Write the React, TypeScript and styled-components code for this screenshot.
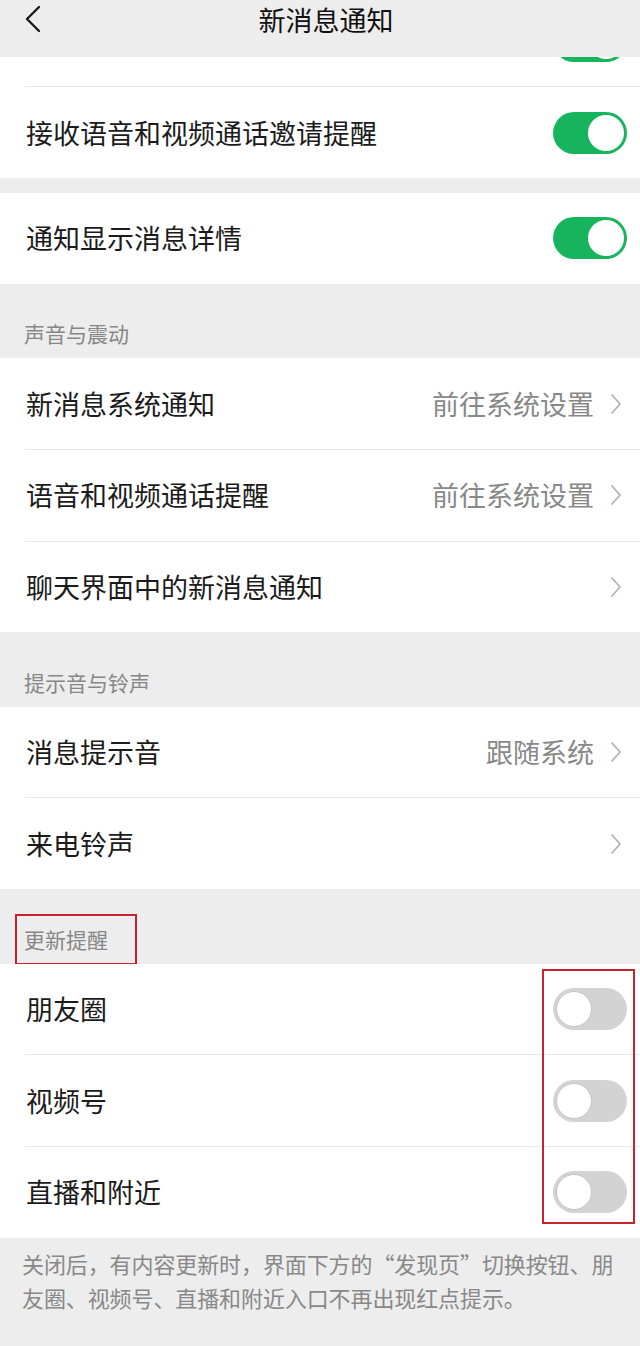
import React from 'react';
import styled, { createGlobalStyle } from 'styled-components';

const GlobalStyle = createGlobalStyle`
  html, body {
    margin: 0;
    padding: 0;
    background: #ededed;
  }
  body {
    font-family: "Noto Sans CJK SC", "Noto Sans", sans-serif;
    -webkit-font-smoothing: antialiased;
  }
`;

const Page = styled.div`
  width: 640px;
  height: 1346px;
  overflow: hidden;
  background: #ededed;
  display: flex;
  flex-direction: column;
`;

const Header = styled.header`
  flex: none;
  height: 57px;
  position: relative;
  display: flex;
  justify-content: center;
  align-items: flex-start;
  padding-left: 12px;
  background: #ededed;
  z-index: 1;
`;

const Title = styled.h1`
  margin: 0;
  font-size: 27px;
  font-weight: 400;
  line-height: 40px;
  color: #111;
`;

const BackButton = styled.button`
  position: absolute;
  left: 18px;
  top: 2px;
  width: 30px;
  height: 34px;
  border: 0;
  padding: 0;
  background: none;
  display: flex;
  align-items: center;
  justify-content: center;
`;

const Viewport = styled.div`
  flex: 1;
  overflow: hidden;
`;

// the list is scrolled a little, so the first row sits under the header
const Scroller = styled.div`
  margin-top: -61.4px;
`;

const Section = styled.section<{ $gap?: boolean }>`
  position: relative;
  background: #fff;
  margin-top: ${(p) => (p.$gap ? '15px' : '0')};
`;

const RowWrap = styled.div`
  & + &::before {
    content: '';
    display: block;
    height: 1px;
    margin-left: 25px;
    background: #e8e8e8;
  }
`;

const Row = styled.div`
  height: 90.7px;
  display: flex;
  align-items: center;
  padding: 0 13px 0 26px;
`;

const Label = styled.span`
  flex: 1;
  font-size: 27px;
  line-height: 40px;
  color: #1b1b1b;
`;

const Value = styled.span`
  font-size: 27px;
  line-height: 40px;
  color: #888;
  margin-right: 16px;
`;

const Chevron = styled.svg`
  width: 12px;
  height: 22px;
  margin-right: 5px;
  flex: none;
`;

const Track = styled.div<{ $on: boolean }>`
  flex: none;
  width: 74px;
  height: 42px;
  border-radius: 21px;
  box-sizing: border-box;
  background: ${(p) => (p.$on ? '#17b45e' : '#d3d3d3')};
  display: flex;
  justify-content: ${(p) => (p.$on ? 'flex-end' : 'flex-start')};
  align-items: center;
  padding: 3px;
`;

const Knob = styled.div<{ $on: boolean }>`
  width: 36px;
  height: 36px;
  border-radius: 50%;
  background: #fff;
  box-sizing: border-box;
  border: ${(p) => (p.$on ? '0' : '1px solid #c4c4c4')};
`;

const GroupTitle = styled.div<{ $marked?: boolean }>`
  height: 74.5px;
  display: flex;
  align-items: flex-end;
  padding: 0 0 ${(p) => (p.$marked ? '0' : '10px')} ${(p) => (p.$marked ? '15px' : '24px')};
  box-sizing: border-box;
  font-size: 21px;
  line-height: 30px;
  color: #878787;
`;

const Marked = styled.span`
  display: inline-flex;
  align-items: center;
  height: 50px;
  box-sizing: border-box;
  padding: 0 27px 0 7px;
  border: 2px solid #c9222c;
  border-bottom-width: 1px;
`;

const MarkBox = styled.div`
  position: absolute;
  top: 5px;
  right: 5px;
  width: 93px;
  height: 255px;
  box-sizing: border-box;
  border: 2px solid #c9222c;
  pointer-events: none;
`;

const Note = styled.p`
  margin: 0;
  padding: 8px 22px 0 22px;
  font-size: 22px;
  line-height: 34px;
  color: #888;
  letter-spacing: -0.1px;
`;

type Item = {
  label: string;
  toggle?: boolean;
  value?: string;
  link?: boolean;
};

function Switch({ on }: { on: boolean }) {
  return (
    <Track $on={on}>
      <Knob $on={on} />
    </Track>
  );
}

function SettingRow({ item }: { item: Item }) {
  return (
    <RowWrap>
      <Row>
        <Label>{item.label}</Label>
        {item.value && <Value>{item.value}</Value>}
        {item.link && (
          <Chevron viewBox="0 0 12 22">
            <polyline
              points="2,2 10,11 2,20"
              fill="none"
              stroke="#b3b3b3"
              strokeWidth="1.8"
              strokeLinecap="round"
              strokeLinejoin="round"
            />
          </Chevron>
        )}
        {item.toggle !== undefined && <Switch on={item.toggle} />}
      </Row>
    </RowWrap>
  );
}

// first row is scrolled up under the header, only its switch edge shows
const topItems: Item[] = [
  { label: '', toggle: true },
  { label: '接收语音和视频通话邀请提醒', toggle: true },
];

const soundItems: Item[] = [
  { label: '新消息系统通知', value: '前往系统设置', link: true },
  { label: '语音和视频通话提醒', value: '前往系统设置', link: true },
  { label: '聊天界面中的新消息通知', link: true },
];

const ringItems: Item[] = [
  { label: '消息提示音', value: '跟随系统', link: true },
  { label: '来电铃声', link: true },
];

const updateItems: Item[] = [
  { label: '朋友圈', toggle: false },
  { label: '视频号', toggle: false },
  { label: '直播和附近', toggle: false },
];

export default function App() {
  return (
    <Page>
      <GlobalStyle />
      <Header>
        <BackButton aria-label="返回">
          <svg width="20" height="30" viewBox="0 0 20 30">
            <polyline
              points="16,3 4,15 16,27"
              fill="none"
              stroke="#1b1b1b"
              strokeWidth="2.4"
              strokeLinecap="round"
              strokeLinejoin="round"
            />
          </svg>
        </BackButton>
        <Title>新消息通知</Title>
      </Header>
      <Viewport>
        <Scroller>
          <Section>
            {topItems.map((it, i) => (
              <SettingRow key={i} item={it} />
            ))}
          </Section>
          <Section $gap>
            <SettingRow item={{ label: '通知显示消息详情', toggle: true }} />
          </Section>

          <GroupTitle>声音与震动</GroupTitle>
          <Section>
            {soundItems.map((it) => (
              <SettingRow key={it.label} item={it} />
            ))}
          </Section>

          <GroupTitle>提示音与铃声</GroupTitle>
          <Section>
            {ringItems.map((it) => (
              <SettingRow key={it.label} item={it} />
            ))}
          </Section>

          <GroupTitle $marked>
            <Marked>更新提醒</Marked>
          </GroupTitle>
          <Section>
            {updateItems.map((it) => (
              <SettingRow key={it.label} item={it} />
            ))}
            <MarkBox />
          </Section>

          <Note>
            关闭后，有内容更新时，界面下方的“发现页”切换按钮、朋友圈、视频号、直播和附近入口不再出现红点提示。
          </Note>
        </Scroller>
      </Viewport>
    </Page>
  );
}
